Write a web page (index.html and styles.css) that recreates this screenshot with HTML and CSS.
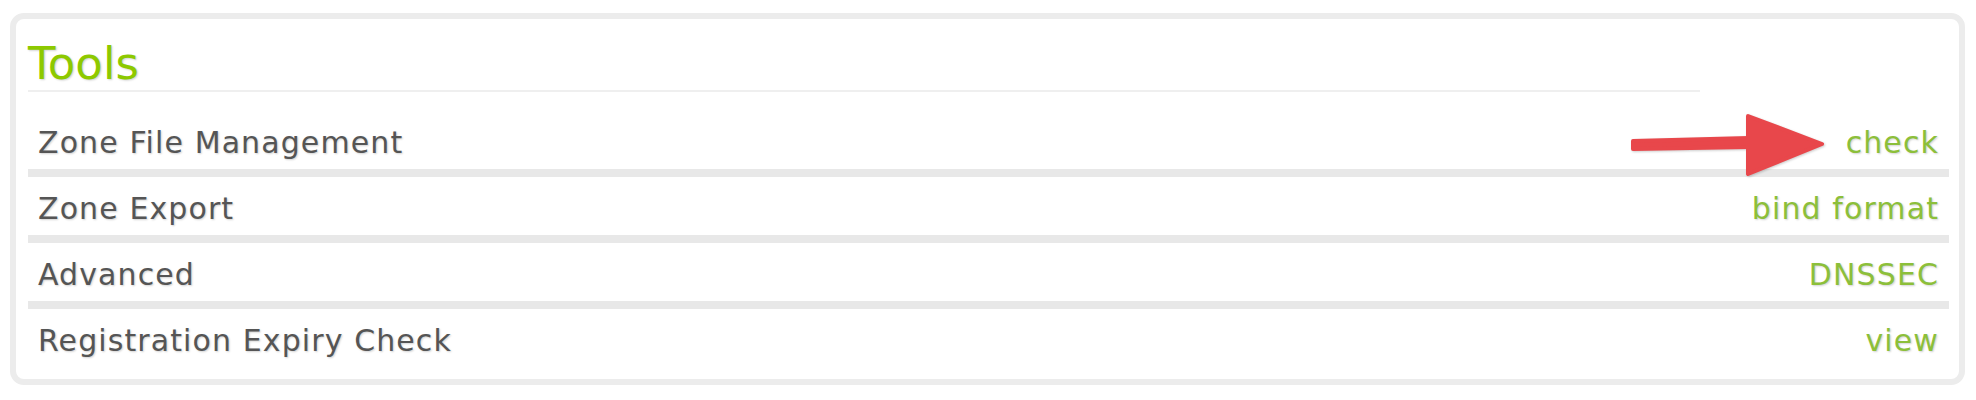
FILE: index.html
```html
<!DOCTYPE html>
<html>
<head>
<meta charset="utf-8">
<link rel="stylesheet" href="styles.css">
</head>
<body>
<div class="panel">
  <h2 class="title">Tools</h2>
  <div class="rule"></div>
  <ul class="rows">
    <li class="row">
      <span class="label">Zone File Management</span>
      <a class="link" href="#">check</a>
      <svg class="arrow" width="205" height="74" viewBox="0 0 205 74">
        <g fill="#e8474b" stroke="#e8474b" stroke-width="4" stroke-linejoin="round" stroke-linecap="round">
          <polygon points="8,33 124,30 124,39 8,41"/>
          <polygon points="123,8 197,36 123,66"/>
        </g>
      </svg>
    </li>
    <li class="row">
      <span class="label">Zone Export</span>
      <a class="link" href="#">bind format</a>
    </li>
    <li class="row">
      <span class="label">Advanced</span>
      <a class="link" href="#">DNSSEC</a>
    </li>
    <li class="row last">
      <span class="label">Registration Expiry Check</span>
      <a class="link" href="#">view</a>
    </li>
  </ul>
</div>
</body>
</html>
```

FILE: styles.css
```css
html, body {
  margin: 0;
  padding: 0;
  background: #ffffff;
}
body {
  padding: 13px 11px 0 10px;
  font-family: "DejaVu Sans", Verdana, sans-serif;
}
.panel {
  border: 6px solid #ececec;
  border-radius: 14px;
  padding: 19px 10px 12px 12px;
  background: #fff;
}
.title {
  margin: 0;
  font-size: 45px;
  line-height: 52px;
  font-weight: normal;
  color: #8dc900;
  text-shadow: 1px 1px 2px rgba(0, 0, 0, 0.18);
}
.rule {
  height: 2px;
  width: 1672px;
  background: #efefef;
  margin-bottom: 19px;
}
.rows {
  list-style: none;
  margin: 0;
  padding: 0;
}
.row {
  position: relative;
  display: flex;
  justify-content: space-between;
  height: 53px;
  padding: 5px 11px 0 10px;
  line-height: 53px;
  font-size: 30px;
  letter-spacing: 1.1px;
  border-bottom: 8px solid #e8e8e8;
  text-shadow: 1px 1px 2px rgba(0, 0, 0, 0.18);
}
.row.last {
  border-bottom: none;
}
.label {
  color: #555555;
}
.link {
  color: #8cbf3a;
  text-decoration: none;
  margin-right: -1px;
}
.arrow {
  position: absolute;
  left: 1597px;
  top: -3px;
  filter: drop-shadow(1px 1px 1px rgba(0, 0, 0, 0.2));
}
```
